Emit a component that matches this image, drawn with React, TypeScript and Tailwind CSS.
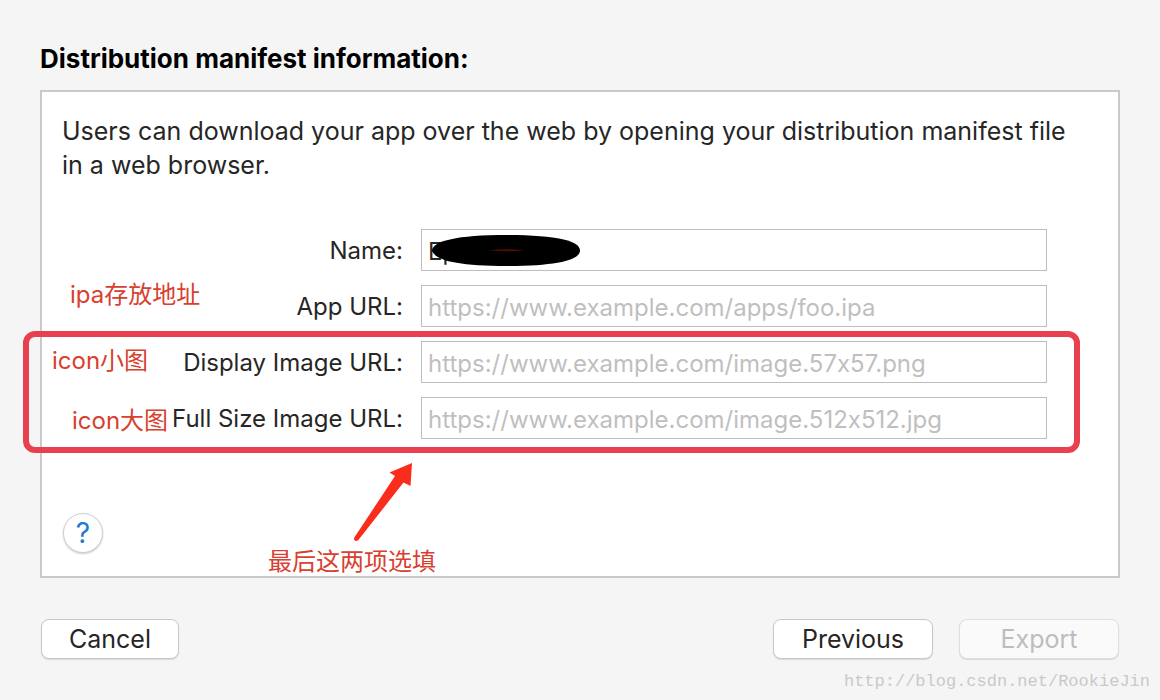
import type { ReactNode } from "react";

type FieldProps = {
  id: string;
  label: string;
  placeholder?: string;
  value?: string;
  children?: ReactNode;
};

function Field({ id, label, placeholder, value, children }: FieldProps) {
  return (
    <div className="relative flex items-center gap-[18px] text-2xl">
      <label htmlFor={id} className="w-[341px] shrink-0 pt-0.5 text-right text-[#262626]">
        {label}
      </label>
      <input
        id={id}
        type="text"
        placeholder={placeholder}
        defaultValue={value}
        className="h-[42px] min-w-0 flex-1 border border-[#bdbdbd] bg-white px-1.5 pt-0.5 text-[#262626] outline-none placeholder:text-[#bfbfbf]"
      />
      {children}
    </div>
  );
}

function Note({ className, children }: { className: string; children: ReactNode }) {
  return (
    <span
      className={`absolute whitespace-nowrap text-2xl leading-8 text-[#d8402f] ${className}`}
    >
      {children}
    </span>
  );
}

const buttonBase =
  "h-10 rounded-lg border text-[25px] leading-8 shadow-[0_1px_1px_rgba(0,0,0,0.12)]";

export default function App() {
  return (
    <main className="relative min-h-screen bg-[#f5f5f5] px-10 pt-[42px] pb-10 font-['Inter','Noto_Sans_CJK_SC',sans-serif] text-[25px] leading-[34px] [font-feature-settings:'calt'_0]">
      <h1 className="text-[26px] font-bold text-black">Distribution manifest information:</h1>

      <section className="mt-3.5 border-2 border-[#c9c9c9] bg-white px-5 pt-[22px] pb-[23px]">
        <p className="pr-4 text-[#262626]">
          Users can download your app over the web by opening your distribution manifest file in a
          web browser.
        </p>

        <form className="mt-[47px] flex flex-col gap-3.5 pr-[51px]">
          <Field id="name" label="Name:" value="Ep">
            <svg
              className="absolute left-[370px] top-1.5"
              width="150"
              height="31"
              viewBox="0 0 150 31"
              aria-hidden="true"
            >
              <path
                d="M0 15C2 6 24 0 75 0C125 0 148 6 148 15.500C148 25 125 31 75 31C24 31 2 25 0 15Z"
                fill="#000"
              />
              <path d="M56 15.500Q75 13 92 15.500Q75 17 56 15.500Z" fill="#4a1004" />
            </svg>
          </Field>
          <Field id="app-url" label="App URL:" placeholder="https://www.example.com/apps/foo.ipa">
            <Note className="left-2 -top-1.5">ipa存放地址</Note>
          </Field>
          <div className="relative flex flex-col gap-3.5">
            <Field
              id="display-image"
              label="Display Image URL:"
              placeholder="https://www.example.com/image.57x57.png"
            >
              <Note className="-left-2.5 top-1">icon小图</Note>
            </Field>
            <Field
              id="full-image"
              label="Full Size Image URL:"
              placeholder="https://www.example.com/image.512x512.jpg"
            >
              <Note className="left-2.5 top-2">icon大图</Note>
            </Field>
            <div className="pointer-events-none absolute -top-2.5 -right-[33px] -bottom-3.5 -left-[39px] rounded-xl border-[6px] border-[#e8404f]" />
            <svg
              className="absolute left-[291px] top-[121px]"
              width="62"
              height="80"
              viewBox="0 0 62 80"
              aria-hidden="true"
            >
              <path
                d="M59 1L36.500 10.500L42 14L1 76Q1 80 5 78.500L50.500 20.500L57.500 24Z"
                fill="#fa2c1c"
              />
            </svg>
            <Note className="left-[206px] top-[205px]">最后这两项选填</Note>
          </div>
        </form>

        <button
          type="button"
          aria-label="Help"
          className="mt-[74px] ml-px flex size-10 items-center justify-center rounded-full border border-[#d0d0d0] bg-white text-[#2479d0] shadow-[0_1px_2px_rgba(0,0,0,0.2)]"
        >
          <span className="text-[28px]">?</span>
        </button>
      </section>

      <div className="mt-[41px] flex justify-between px-px">
        <button type="button" className={`${buttonBase} w-[138px] border-[#c8c8c8] bg-white text-[#262626]`}>
          Cancel
        </button>
        <div className="flex gap-[26px]">
          <button type="button" className={`${buttonBase} w-40 border-[#c8c8c8] bg-white text-[#262626]`}>
            Previous
          </button>
          <button
            type="button"
            disabled
            className={`${buttonBase} w-40 border-[#dedede] bg-[#fafafa] text-[#bdbdbd]`}
          >
            Export
          </button>
        </div>
      </div>

      <span className="absolute right-2.5 bottom-1 font-['Liberation_Mono',monospace] text-[17px] leading-7 text-[#c9c9c9]">
        http://blog.csdn.net/RookieJin
      </span>
    </main>
  );
}
